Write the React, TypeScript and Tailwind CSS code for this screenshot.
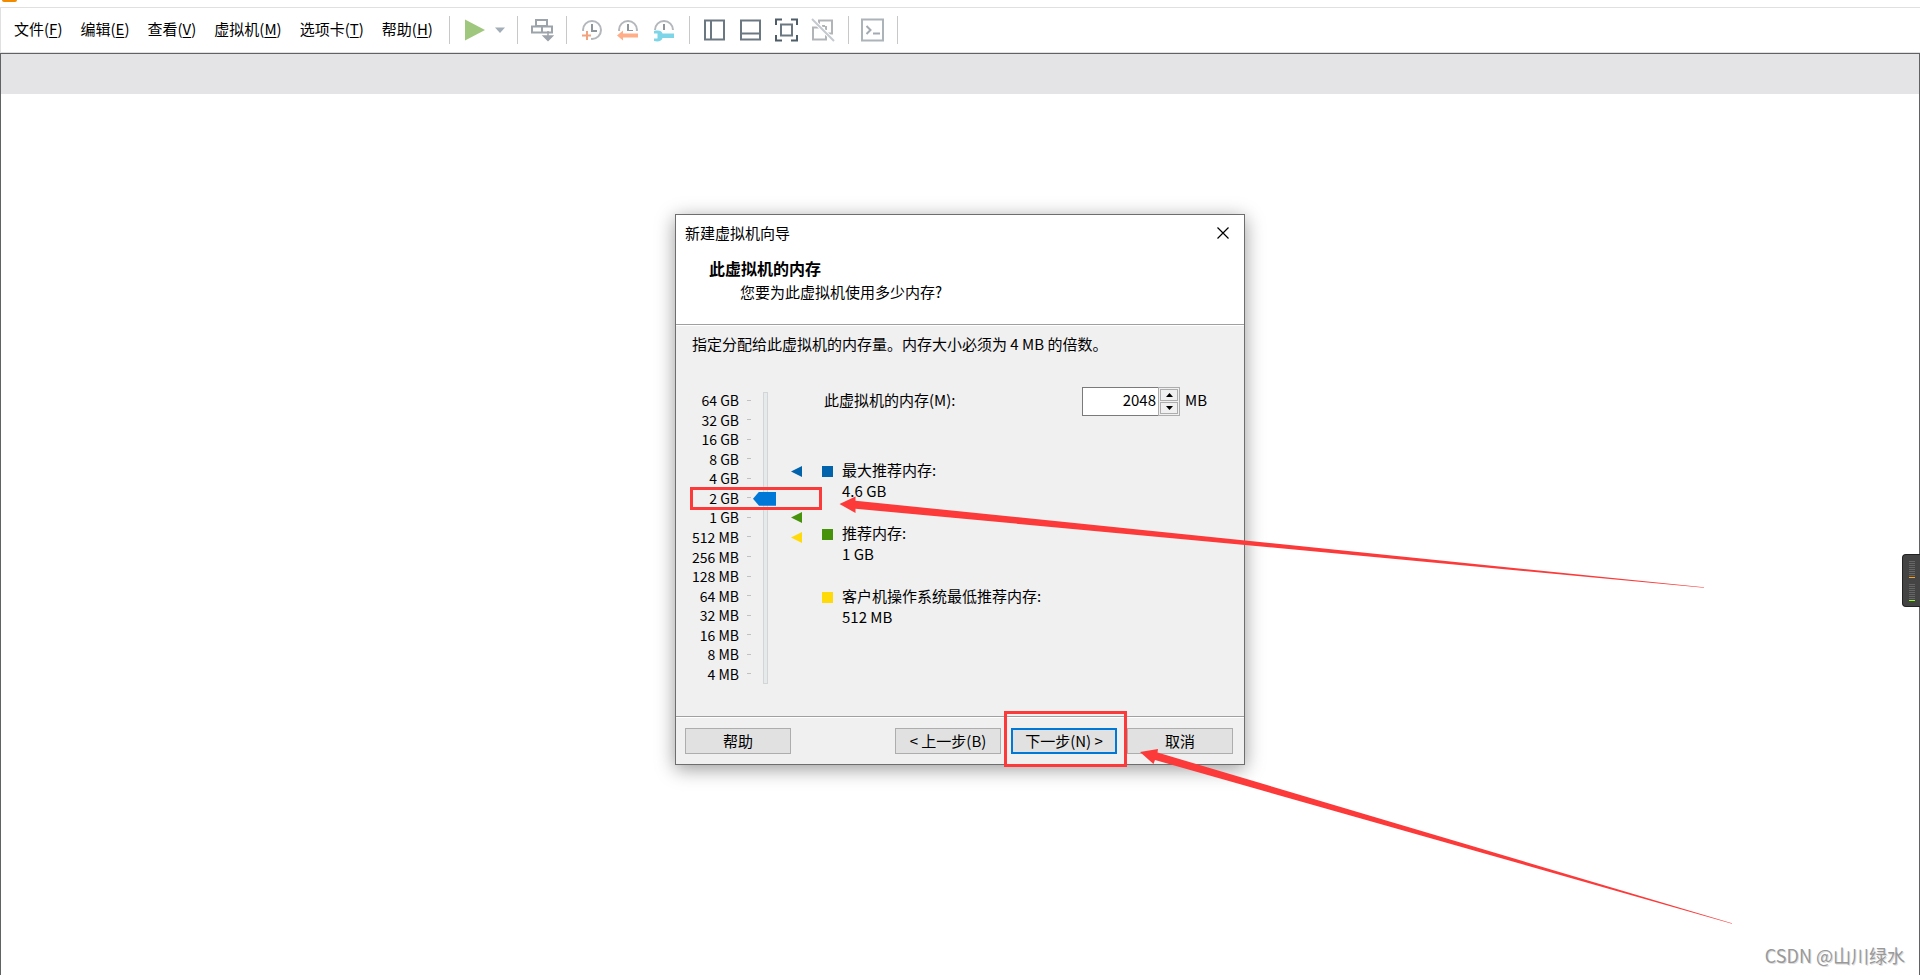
import { useState, type ReactNode } from "react";

const menus = [
  { label: "文件", hotkey: "F" },
  { label: "编辑", hotkey: "E" },
  { label: "查看", hotkey: "V" },
  { label: "虚拟机", hotkey: "M" },
  { label: "选项卡", hotkey: "T" },
  { label: "帮助", hotkey: "H" },
];

const scale = [
  "64 GB",
  "32 GB",
  "16 GB",
  "8 GB",
  "4 GB",
  "2 GB",
  "1 GB",
  "512 MB",
  "256 MB",
  "128 MB",
  "64 MB",
  "32 MB",
  "16 MB",
  "8 MB",
  "4 MB",
];

const legend = [
  { label: "最大推荐内存:", value: "4.6 GB", color: "bg-[#0063ac]" },
  { label: "推荐内存:", value: "1 GB", color: "bg-[#46920a]" },
  { label: "客户机操作系统最低推荐内存:", value: "512 MB", color: "bg-[#ffda0a]" },
];

function Divider() {
  return <div className="h-7 w-px shrink-0 bg-[#c8c8c8]" />;
}

function ToolButton({ label, children }: { label: string; children: ReactNode }) {
  return (
    <button type="button" aria-label={label} className="shrink-0">
      <svg width="24" height="24" viewBox="0 0 24 24" fill="none" strokeWidth="2">
        {children}
      </svg>
    </button>
  );
}

function ClockFace() {
  return (
    <>
      <circle cx="12" cy="12" r="9" stroke="#b4b8bc" />
      <path d="M12 6v7h5" stroke="#8e959b" />
    </>
  );
}

function Toolbar() {
  return (
    <div className="flex items-center">
      <Divider />
      <button type="button" aria-label="开机" className="ml-[15px] flex items-center gap-2.5">
        <svg width="20" height="22" viewBox="0 0 20 22">
          <path d="M0 0.5 20 11 0 21.5Z" fill="#9fc77e" />
        </svg>
        <svg width="10" height="6" viewBox="0 0 10 6">
          <path d="M0 0.5h10L5 6Z" fill="#a3adb8" />
        </svg>
      </button>
      <div className="ml-3">
        <Divider />
      </div>
      <div className="mx-3 flex">
        <ToolButton label="发送 Ctrl+Alt+Del">
          <path d="M6 2h11v6H6zM2 8.500h20v6H2zM12 8.500v6" stroke="#9da3aa" />
          <path d="M18 13v9M13.500 18h9L18 22.500Z" stroke="#9da3aa" strokeWidth="1.500" fill="#9da3aa" />
        </ToolButton>
      </div>
      <Divider />
      <div className="mx-[13px] flex gap-3">
        <ToolButton label="拍摄快照">
          <ClockFace />
          <path d="M2 13h9v9H2z" fill="#fff" />
          <path d="M7 13v9M2 17.500h9" stroke="#f2a27c" strokeWidth="2" />
        </ToolButton>
        <ToolButton label="恢复快照">
          <ClockFace />
          <path d="M1 13h22v10H1z" fill="#fff" />
          <path d="M1 17.500l6-5v3h15v4H7v3Z" fill="#ffae88" />
        </ToolButton>
        <ToolButton label="管理快照">
          <ClockFace />
          <path d="M1 12h22v11H1z" fill="#fff" />
          <path
            d="M2 13c5-1 8 0 8.500 2.500H22v4.500H10.500c-.5 3-4 4-8.500 3v-2.500h3.500v-5H2Z"
            fill="#7fd5e8"
          />
        </ToolButton>
      </div>
      <Divider />
      <div className="mx-[13px] flex gap-3">
        <ToolButton label="显示库">
          <path d="M2 2.500h19v19H2zM8 2.500v19" stroke="#6c7881" />
        </ToolButton>
        <ToolButton label="显示缩略图">
          <path d="M2 2.500h19v19H2zM2 15.500h19" stroke="#6c7881" />
        </ToolButton>
        <ToolButton label="全屏">
          <path d="M1 7V1.500h6M16 1.500h6V7M22 17v5.500h-6M7 22.500H1V17" stroke="#4f5d68" />
          <path d="M6 6.500h11v11H6z" stroke="#6c7881" />
        </ToolButton>
        <ToolButton label="Unity">
          <path d="M8 7V2.500h13v13h-5M2 9.500h6M2 8.500v13h13v-7M14 8h-3M15 8v4" stroke="#b1b5b8" />
          <path d="M1 1l22 22" stroke="#fff" strokeWidth="4" />
          <path d="M1 1l22 22" stroke="#c3c9ce" strokeWidth="2" />
        </ToolButton>
      </div>
      <Divider />
      <div className="mx-3 flex">
        <ToolButton label="控制台">
          <path d="M1 1.500h21v21H1z" stroke="#acb4ba" />
          <path d="M5.500 8l4 4-4 4" stroke="#a2abb2" />
          <path d="M12 15.500h7" stroke="#a2abb2" />
        </ToolButton>
      </div>
      <Divider />
    </div>
  );
}

function MemorySlider({ level, onChange }: { level: number; onChange: (level: number) => void }) {
  return (
    <div className="flex pt-1">
      <ul className="mt-px flex h-[290px] w-[75px] flex-col justify-between text-sm/4">
        {scale.map((size) => (
          <li key={size} className="flex items-center justify-end gap-2">
            {size}
            <span className="h-px w-1 bg-[#c0c0c0]" />
          </li>
        ))}
      </ul>
      <div className="ml-0.5 grid h-[294px] w-[23px] items-center justify-items-center">
        <div className="col-start-1 row-start-1 ml-px h-[292px] w-[5px] border border-[#d2d6d6] bg-[#e7eaea]" />
        <input
          type="range"
          aria-label="内存大小"
          min={0}
          max={14}
          value={level}
          onChange={(e) => onChange(Number(e.target.value))}
          className="z-10 col-start-1 row-start-1 m-0 h-[288px] w-[23px] appearance-none bg-transparent [direction:rtl] [writing-mode:vertical-lr] [&::-webkit-slider-thumb]:h-3.5 [&::-webkit-slider-thumb]:w-[23px] [&::-webkit-slider-thumb]:appearance-none [&::-webkit-slider-thumb]:bg-[#0078d7] [&::-webkit-slider-thumb]:[clip-path:polygon(0_50%,6px_0,100%_0,100%_100%,6px_100%)]"
        />
      </div>
      <svg width="11" height="292" viewBox="0 0 11 292" className="ml-[15px]">
        <path d="M0 80.500 11 75v11Z" fill="#0063ac" />
        <path d="M0 126.500 11 121v11Z" fill="#46920a" />
        <path d="M0 146.500 11 141v11Z" fill="#ffda0a" />
      </svg>
    </div>
  );
}

function DialogButton({ primary, children }: { primary?: boolean; children: ReactNode }) {
  return (
    <button
      type="button"
      className={
        primary
          ? "flex h-[26px] w-[106px] items-center justify-center border-2 border-[#0078d7] bg-[#e1e1e1]"
          : "flex h-[26px] w-[106px] items-center justify-center border border-[#adadad] bg-[#e1e1e1]"
      }
    >
      {children}
    </button>
  );
}

// Red frames and arrows that point out the slider and the next button
function Annotations() {
  return (
    <svg
      width="1060"
      height="720"
      viewBox="0 0 1060 720"
      className="pointer-events-none absolute -left-px -top-px z-20 max-w-none"
      aria-hidden="true"
    >
      <g fill="none" stroke="#fc3a3a" strokeWidth="3">
        <rect x="16.500" y="274.500" width="129" height="20" />
        <rect x="330.500" y="498.500" width="120" height="53" />
      </g>
      <g fill="#fc3a3a">
        <path d="M164.500 290 180.500 282.500V286.700L1029 373.300V373.800L180.500 294.700V299Z" />
        <path d="M465 538 483 535 482.500 538.500 1057 709.200V709.800L480 546 478.500 550Z" />
      </g>
    </svg>
  );
}

function MemoryDialog() {
  const [level, setLevel] = useState(9);

  return (
    <section
      role="dialog"
      aria-labelledby="wizard-title"
      className="relative flex min-h-[551px] w-[570px] shrink-0 flex-col border border-[#6e6e6e] bg-[#f0f0f0] shadow-[0_4px_18px_rgba(0,0,0,0.4)]"
    >
      <header className="border-b border-[#a0a0a0] bg-white pb-5">
        <div className="flex h-[35px] items-center justify-between pl-[9px]">
          <h1 id="wizard-title">新建虚拟机向导</h1>
          <button type="button" aria-label="关闭" className="flex h-full w-[42px] items-center justify-center">
            <svg width="12" height="12" viewBox="0 0 12 12" stroke="#000" strokeWidth="1.200">
              <path d="M0.500 0.500l11 11M11.500 0.500l-11 11" />
            </svg>
          </button>
        </div>
        <h2 className="mt-1.5 pl-[33px] text-[16px]/6 font-bold">此虚拟机的内存</h2>
        <p className="pl-16 leading-6">您要为此虚拟机使用多少内存?</p>
      </header>

      <div className="flex-1 border-t border-white pt-2">
        <p className="pl-4">指定分配给此虚拟机的内存量。内存大小必须为 4 MB 的倍数。</p>
        <div className="mt-[33px] flex">
          <MemorySlider level={level} onChange={setLevel} />
          <div className="ml-5">
            <div className="flex h-[29px]">
              <label htmlFor="memory" className="w-[260px] pt-[3px] pl-0.5">
                此虚拟机的内存(M):
              </label>
              <div className="flex h-full w-[98px]">
                <input
                  id="memory"
                  type="text"
                  value={2 ** (level + 2)}
                  readOnly
                  className="w-[76px] border border-r-0 border-[#7a7a7a] bg-white pr-0.5 pb-1 text-right outline-none"
                />
                <div className="flex w-[22px] flex-col gap-px border border-[#adadad] p-px">
                  <button
                    type="button"
                    aria-label="增加"
                    onClick={() => setLevel(Math.min(level + 1, 14))}
                    className="flex flex-1 items-center justify-center border border-[#adadad]"
                  >
                    <svg width="7" height="4" viewBox="0 0 7 4">
                      <path d="M3.500 0 7 4H0Z" />
                    </svg>
                  </button>
                  <button
                    type="button"
                    aria-label="减少"
                    onClick={() => setLevel(Math.max(level - 1, 0))}
                    className="flex flex-1 items-center justify-center border border-[#adadad]"
                  >
                    <svg width="7" height="4" viewBox="0 0 7 4">
                      <path d="M0 0h7L3.500 4Z" />
                    </svg>
                  </button>
                </div>
              </div>
              <span className="ml-[5px] pt-[3px]">MB</span>
            </div>

            <dl className="mt-[43px] flex flex-col gap-[21px] leading-[21px]">
              {legend.map((item) => (
                <div key={item.label} className="grid grid-cols-[11px_1fr] gap-x-[9px]">
                  <span className={`mt-[7px] size-[11px] ${item.color}`} />
                  <dt>{item.label}</dt>
                  <dd className="col-start-2">{item.value}</dd>
                </div>
              ))}
            </dl>
          </div>
        </div>
      </div>

      <footer className="border-t border-[#a0a0a0]">
        <div className="flex justify-between border-t border-white py-2.5 pl-[9px] pr-[11px]">
          <DialogButton>帮助</DialogButton>
          <div className="flex gap-2.5">
            <DialogButton>&lt; 上一步(B)</DialogButton>
            <DialogButton primary>下一步(N) &gt;</DialogButton>
            <DialogButton>取消</DialogButton>
          </div>
        </div>
      </footer>

      <Annotations />
    </section>
  );
}

function MeterBars({ last }: { last: string }) {
  return (
    <div className="flex flex-col gap-px">
      {[0, 1, 2, 3, 4, 5, 6, 7, 8].map((bar) => (
        <span key={bar} className={`h-px w-1.5 ${bar === 8 ? last : "bg-[#666]"}`} />
      ))}
    </div>
  );
}

export default function App() {
  return (
    <div className="relative flex min-h-screen flex-col overflow-hidden bg-white font-['Noto_Sans_CJK_SC',sans-serif] text-[15px]/5 text-black">
      <div className="h-[7px] pl-0.5">
        <div className="h-0.5 w-[15px] rounded-b-sm bg-[#f38b00]" />
      </div>
      <header className="flex h-[46px] items-center border border-r-0 border-[#e0e0e0] pl-[13px]">
        <nav className="flex gap-[18px] pr-4 pb-0.5">
          {menus.map((menu) => (
            <button key={menu.hotkey} type="button" className="whitespace-nowrap">
              {menu.label}(<span className="underline underline-offset-2">{menu.hotkey}</span>)
            </button>
          ))}
        </nav>
        <Toolbar />
      </header>

      <main className="flex flex-1 flex-col items-center border border-b-0 border-[#606264]">
        <div className="h-10 w-full bg-[#e4e4e6]" />
        <div className="pt-[120px] pb-10">
          <MemoryDialog />
        </div>
      </main>

      {/* Floating level meter on the window edge */}
      <div className="absolute right-0 top-[554px] flex h-[53px] w-[18px] flex-col items-center gap-1.5 rounded-l-sm border border-r-0 border-[#222] bg-[#444] pt-1.5">
        <MeterBars last="bg-[#ffa31a]" />
        <MeterBars last="bg-[#8cff1a]" />
      </div>

      <p className="absolute right-[15px] bottom-2 text-[18px]/6 text-[#999] [text-shadow:1px_1px_0_#ddd]">
        CSDN @山川绿水
      </p>
    </div>
  );
}
